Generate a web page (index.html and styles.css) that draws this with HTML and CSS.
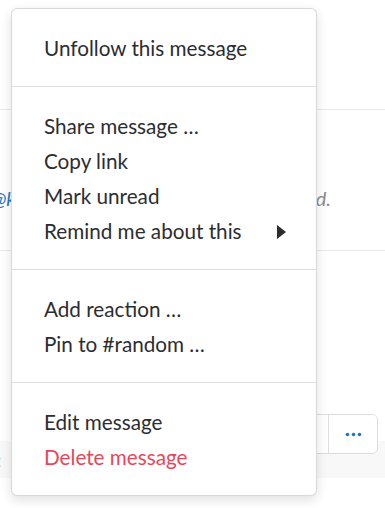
FILE: index.html
```html
<html>

<head>
    <title>Message menu</title>
    <link rel="stylesheet" href="styles.css">
</head>

<body>
    <div class="feed">
        <div class="msg msg-top"></div>
        <div class="msg msg-mid">
            <span class="mention">@kate</span>
            <span class="note">pinned.</span>
        </div>
        <div class="msg msg-low"></div>
        <div class="msg-hover">
            <span class="cut">t</span>
        </div>
    </div>

    <div class="actions">
        <button class="act act-left"></button>
        <button class="act act-more">
            <svg width="17" height="5" viewBox="0 0 17 5">
                <circle cx="2.5" cy="2.5" r="1.8" fill="#1d79c5"/>
                <circle cx="8.5" cy="2.5" r="1.8" fill="#1d79c5"/>
                <circle cx="14.5" cy="2.5" r="1.8" fill="#1d79c5"/>
            </svg>
        </button>
    </div>

    <div class="menu">
        <div class="section">
            <div class="item">Unfollow this message</div>
        </div>
        <div class="section">
            <div class="item">Share message …</div>
            <div class="item">Copy link</div>
            <div class="item">Mark unread</div>
            <div class="item submenu">Remind me about this
                <svg class="caret" width="9" height="14" viewBox="0 0 9 14">
                    <path d="M0 0 L9 7 L0 14 Z" fill="#2c2d30"/>
                </svg>
            </div>
        </div>
        <div class="section">
            <div class="item">Add reaction …</div>
            <div class="item">Pin to #random …</div>
        </div>
        <div class="section">
            <div class="item">Edit message</div>
            <div class="item danger">Delete message</div>
        </div>
    </div>
</body>

</html>
```

FILE: styles.css
```css
body {
    margin: 0;
    width: 385px;
    height: 508px;
    overflow: hidden;
    position: relative;
    background: #fff;
    font-family: 'Lato', sans-serif;
    color: #2c2d30;
}

.feed {
    display: flex;
    flex-direction: column;
}

.msg-top {
    height: 109px;
    border-bottom: 1px solid #e8e8e8;
}

.msg-mid {
    height: 141px;
    border-bottom: 1px solid #e8e8e8;
    display: flex;
    align-items: center;
    font-size: 20px;
    padding-top: 36px;
    box-sizing: border-box;
}

.mention {
    color: #1d79c5;
    font-style: italic;
    margin-left: -9px;
}

.note {
    margin-left: auto;
    margin-right: 54px;
    color: #8c8c8c;
    font-style: italic;
}

.msg-low {
    height: 190px;
}

.msg-hover {
    height: 37px;
    background: #f8f8f8;
    display: flex;
    align-items: center;
    font-size: 18px;
}

.cut {
    margin-left: -6px;
    color: #555;
}

/* hover toolbar of the message */
.actions {
    position: absolute;
    top: 414px;
    left: 300px;
    display: flex;
    height: 40px;
    border: 1px solid #dcdcdc;
    border-radius: 6px;
    background: #fff;
    overflow: hidden;
    box-sizing: border-box;
}

.act {
    border: none;
    background: #fff;
    padding: 0;
    margin: 0;
    height: 38px;
    display: flex;
    align-items: center;
    justify-content: center;
}

.act-left {
    width: 28px;
    border-right: 1px solid #dcdcdc;
}

.act-more {
    width: 48px;
}

.menu {
    position: absolute;
    top: 8px;
    left: 11px;
    width: 306px;
    height: 488px;
    box-sizing: border-box;
    background: #fff;
    border: 1px solid rgba(0, 0, 0, 0.15);
    border-radius: 6px;
    box-shadow: 0 4px 12px 0 rgba(0, 0, 0, 0.12);
    display: flex;
    flex-direction: column;
}

.section {
    padding: 22px 0 20px;
}

.section + .section {
    border-top: 1px solid #dedede;
}

.item {
    height: 35px;
    line-height: 35px;
    padding: 0 30px 0 32px;
    font-size: 20.7px;
    display: flex;
    align-items: center;
}

.submenu .caret {
    margin-left: auto;
}

.danger {
    color: #e8475a;
}
```
